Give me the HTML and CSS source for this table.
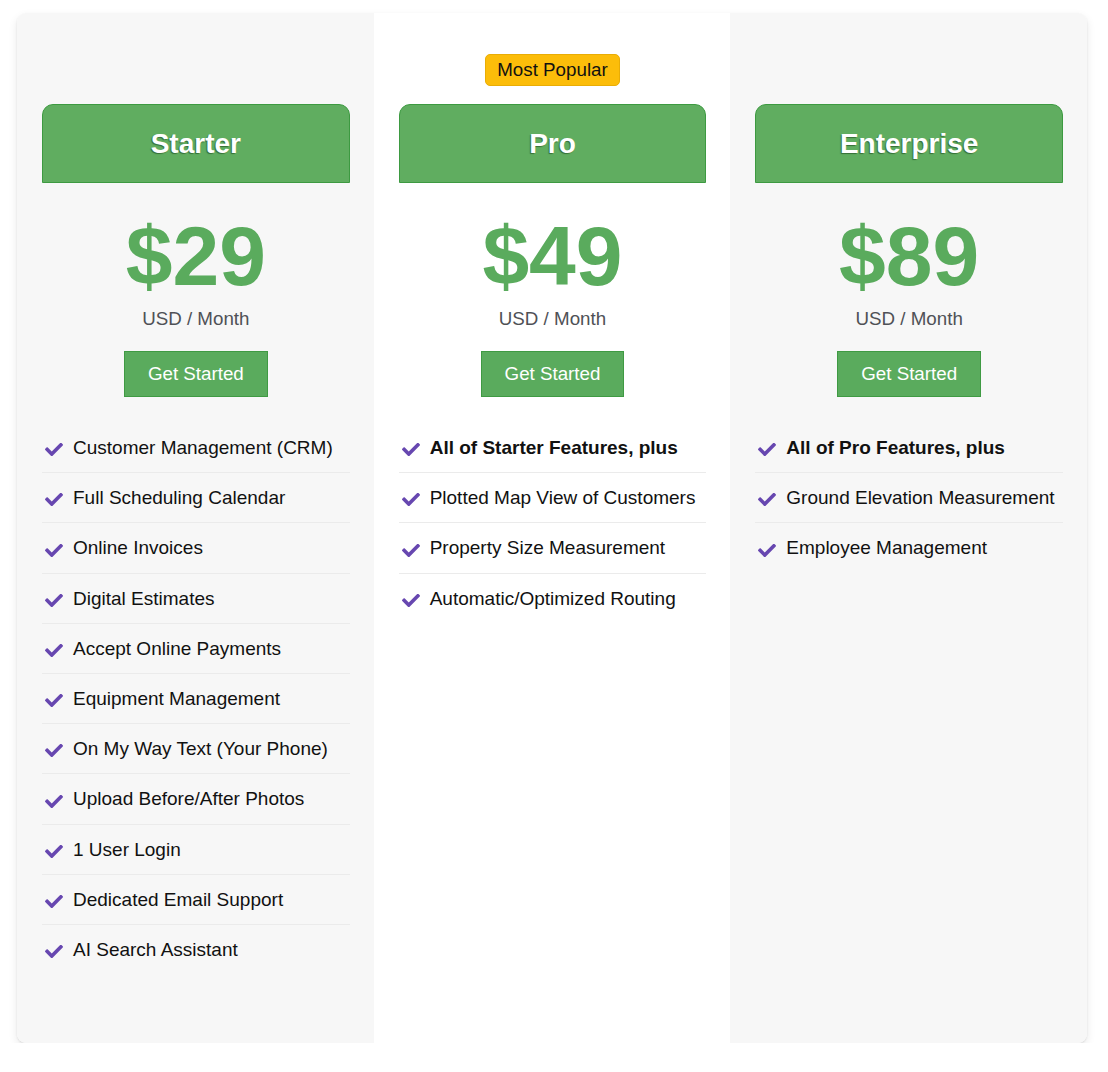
FILE: index.html
```html
<!DOCTYPE html>
<html lang="en">
<head>
<meta charset="utf-8">
<title>Pricing</title>
<link rel="stylesheet" href="styles.css">
</head>
<body>
<div class="pricing">
  <div class="plan plan-shaded">
    <div class="badge-slot"></div>
    <div class="plan-head"><h2>Starter</h2></div>
    <div class="price">$29</div>
    <div class="period">USD / Month</div>
    <div class="cta-row"><a class="cta" href="#">Get Started</a></div>
    <ul class="features">
      <li><svg class="chk" viewBox="0 72 512 370"><path d="M173.898 439.404l-166.4-166.4c-9.997-9.997-9.997-26.206 0-36.204l36.203-36.204c9.997-9.998 26.207-9.998 36.204 0L192 312.69 432.095 72.596c9.997-9.997 26.207-9.997 36.204 0l36.203 36.204c9.997 9.997 9.997 26.206 0 36.204l-294.4 294.401c-9.998 9.997-26.207 9.997-36.204-.001z"/></svg><span>Customer Management (CRM)</span></li>
      <li><svg class="chk" viewBox="0 72 512 370"><path d="M173.898 439.404l-166.4-166.4c-9.997-9.997-9.997-26.206 0-36.204l36.203-36.204c9.997-9.998 26.207-9.998 36.204 0L192 312.69 432.095 72.596c9.997-9.997 26.207-9.997 36.204 0l36.203 36.204c9.997 9.997 9.997 26.206 0 36.204l-294.4 294.401c-9.998 9.997-26.207 9.997-36.204-.001z"/></svg><span>Full Scheduling Calendar</span></li>
      <li><svg class="chk" viewBox="0 72 512 370"><path d="M173.898 439.404l-166.4-166.4c-9.997-9.997-9.997-26.206 0-36.204l36.203-36.204c9.997-9.998 26.207-9.998 36.204 0L192 312.69 432.095 72.596c9.997-9.997 26.207-9.997 36.204 0l36.203 36.204c9.997 9.997 9.997 26.206 0 36.204l-294.4 294.401c-9.998 9.997-26.207 9.997-36.204-.001z"/></svg><span>Online Invoices</span></li>
      <li><svg class="chk" viewBox="0 72 512 370"><path d="M173.898 439.404l-166.4-166.4c-9.997-9.997-9.997-26.206 0-36.204l36.203-36.204c9.997-9.998 26.207-9.998 36.204 0L192 312.69 432.095 72.596c9.997-9.997 26.207-9.997 36.204 0l36.203 36.204c9.997 9.997 9.997 26.206 0 36.204l-294.4 294.401c-9.998 9.997-26.207 9.997-36.204-.001z"/></svg><span>Digital Estimates</span></li>
      <li><svg class="chk" viewBox="0 72 512 370"><path d="M173.898 439.404l-166.4-166.4c-9.997-9.997-9.997-26.206 0-36.204l36.203-36.204c9.997-9.998 26.207-9.998 36.204 0L192 312.69 432.095 72.596c9.997-9.997 26.207-9.997 36.204 0l36.203 36.204c9.997 9.997 9.997 26.206 0 36.204l-294.4 294.401c-9.998 9.997-26.207 9.997-36.204-.001z"/></svg><span>Accept Online Payments</span></li>
      <li><svg class="chk" viewBox="0 72 512 370"><path d="M173.898 439.404l-166.4-166.4c-9.997-9.997-9.997-26.206 0-36.204l36.203-36.204c9.997-9.998 26.207-9.998 36.204 0L192 312.69 432.095 72.596c9.997-9.997 26.207-9.997 36.204 0l36.203 36.204c9.997 9.997 9.997 26.206 0 36.204l-294.4 294.401c-9.998 9.997-26.207 9.997-36.204-.001z"/></svg><span>Equipment Management</span></li>
      <li><svg class="chk" viewBox="0 72 512 370"><path d="M173.898 439.404l-166.4-166.4c-9.997-9.997-9.997-26.206 0-36.204l36.203-36.204c9.997-9.998 26.207-9.998 36.204 0L192 312.69 432.095 72.596c9.997-9.997 26.207-9.997 36.204 0l36.203 36.204c9.997 9.997 9.997 26.206 0 36.204l-294.4 294.401c-9.998 9.997-26.207 9.997-36.204-.001z"/></svg><span>On My Way Text (Your Phone)</span></li>
      <li><svg class="chk" viewBox="0 72 512 370"><path d="M173.898 439.404l-166.4-166.4c-9.997-9.997-9.997-26.206 0-36.204l36.203-36.204c9.997-9.998 26.207-9.998 36.204 0L192 312.69 432.095 72.596c9.997-9.997 26.207-9.997 36.204 0l36.203 36.204c9.997 9.997 9.997 26.206 0 36.204l-294.4 294.401c-9.998 9.997-26.207 9.997-36.204-.001z"/></svg><span>Upload Before/After Photos</span></li>
      <li><svg class="chk" viewBox="0 72 512 370"><path d="M173.898 439.404l-166.4-166.4c-9.997-9.997-9.997-26.206 0-36.204l36.203-36.204c9.997-9.998 26.207-9.998 36.204 0L192 312.69 432.095 72.596c9.997-9.997 26.207-9.997 36.204 0l36.203 36.204c9.997 9.997 9.997 26.206 0 36.204l-294.4 294.401c-9.998 9.997-26.207 9.997-36.204-.001z"/></svg><span>1 User Login</span></li>
      <li><svg class="chk" viewBox="0 72 512 370"><path d="M173.898 439.404l-166.4-166.4c-9.997-9.997-9.997-26.206 0-36.204l36.203-36.204c9.997-9.998 26.207-9.998 36.204 0L192 312.69 432.095 72.596c9.997-9.997 26.207-9.997 36.204 0l36.203 36.204c9.997 9.997 9.997 26.206 0 36.204l-294.4 294.401c-9.998 9.997-26.207 9.997-36.204-.001z"/></svg><span>Dedicated Email Support</span></li>
      <li><svg class="chk" viewBox="0 72 512 370"><path d="M173.898 439.404l-166.4-166.4c-9.997-9.997-9.997-26.206 0-36.204l36.203-36.204c9.997-9.998 26.207-9.998 36.204 0L192 312.69 432.095 72.596c9.997-9.997 26.207-9.997 36.204 0l36.203 36.204c9.997 9.997 9.997 26.206 0 36.204l-294.4 294.401c-9.998 9.997-26.207 9.997-36.204-.001z"/></svg><span>AI Search Assistant</span></li>
    </ul>
  </div>

  <div class="plan">
    <div class="badge-slot"><span class="badge">Most Popular</span></div>
    <div class="plan-head"><h2>Pro</h2></div>
    <div class="price">$49</div>
    <div class="period">USD / Month</div>
    <div class="cta-row"><a class="cta" href="#">Get Started</a></div>
    <ul class="features">
      <li><svg class="chk" viewBox="0 72 512 370"><path d="M173.898 439.404l-166.4-166.4c-9.997-9.997-9.997-26.206 0-36.204l36.203-36.204c9.997-9.998 26.207-9.998 36.204 0L192 312.69 432.095 72.596c9.997-9.997 26.207-9.997 36.204 0l36.203 36.204c9.997 9.997 9.997 26.206 0 36.204l-294.4 294.401c-9.998 9.997-26.207 9.997-36.204-.001z"/></svg><strong>All of Starter Features, plus</strong></li>
      <li><svg class="chk" viewBox="0 72 512 370"><path d="M173.898 439.404l-166.4-166.4c-9.997-9.997-9.997-26.206 0-36.204l36.203-36.204c9.997-9.998 26.207-9.998 36.204 0L192 312.69 432.095 72.596c9.997-9.997 26.207-9.997 36.204 0l36.203 36.204c9.997 9.997 9.997 26.206 0 36.204l-294.4 294.401c-9.998 9.997-26.207 9.997-36.204-.001z"/></svg><span>Plotted Map View of Customers</span></li>
      <li><svg class="chk" viewBox="0 72 512 370"><path d="M173.898 439.404l-166.4-166.4c-9.997-9.997-9.997-26.206 0-36.204l36.203-36.204c9.997-9.998 26.207-9.998 36.204 0L192 312.69 432.095 72.596c9.997-9.997 26.207-9.997 36.204 0l36.203 36.204c9.997 9.997 9.997 26.206 0 36.204l-294.4 294.401c-9.998 9.997-26.207 9.997-36.204-.001z"/></svg><span>Property Size Measurement</span></li>
      <li><svg class="chk" viewBox="0 72 512 370"><path d="M173.898 439.404l-166.4-166.4c-9.997-9.997-9.997-26.206 0-36.204l36.203-36.204c9.997-9.998 26.207-9.998 36.204 0L192 312.69 432.095 72.596c9.997-9.997 26.207-9.997 36.204 0l36.203 36.204c9.997 9.997 9.997 26.206 0 36.204l-294.4 294.401c-9.998 9.997-26.207 9.997-36.204-.001z"/></svg><span>Automatic/Optimized Routing</span></li>
    </ul>
  </div>

  <div class="plan plan-shaded">
    <div class="badge-slot"></div>
    <div class="plan-head"><h2>Enterprise</h2></div>
    <div class="price">$89</div>
    <div class="period">USD / Month</div>
    <div class="cta-row"><a class="cta" href="#">Get Started</a></div>
    <ul class="features">
      <li><svg class="chk" viewBox="0 72 512 370"><path d="M173.898 439.404l-166.4-166.4c-9.997-9.997-9.997-26.206 0-36.204l36.203-36.204c9.997-9.998 26.207-9.998 36.204 0L192 312.69 432.095 72.596c9.997-9.997 26.207-9.997 36.204 0l36.203 36.204c9.997 9.997 9.997 26.206 0 36.204l-294.4 294.401c-9.998 9.997-26.207 9.997-36.204-.001z"/></svg><strong>All of Pro Features, plus</strong></li>
      <li><svg class="chk" viewBox="0 72 512 370"><path d="M173.898 439.404l-166.4-166.4c-9.997-9.997-9.997-26.206 0-36.204l36.203-36.204c9.997-9.998 26.207-9.998 36.204 0L192 312.69 432.095 72.596c9.997-9.997 26.207-9.997 36.204 0l36.203 36.204c9.997 9.997 9.997 26.206 0 36.204l-294.4 294.401c-9.998 9.997-26.207 9.997-36.204-.001z"/></svg><span>Ground Elevation Measurement</span></li>
      <li><svg class="chk" viewBox="0 72 512 370"><path d="M173.898 439.404l-166.4-166.4c-9.997-9.997-9.997-26.206 0-36.204l36.203-36.204c9.997-9.998 26.207-9.998 36.204 0L192 312.69 432.095 72.596c9.997-9.997 26.207-9.997 36.204 0l36.203 36.204c9.997 9.997 9.997 26.206 0 36.204l-294.4 294.401c-9.998 9.997-26.207 9.997-36.204-.001z"/></svg><span>Employee Management</span></li>
    </ul>
  </div>
</div>
</body>
</html>
```

FILE: styles.css
```css
* { box-sizing: border-box; }

html, body {
  margin: 0;
  padding: 0;
  background: #ffffff;
}

body {
  padding: 13px 21px 0 17px;
  font-family: "Liberation Sans", Arial, sans-serif;
  color: #111;
}

.pricing {
  width: 1070px;
  height: 1030px;
  display: grid;
  grid-template-columns: repeat(3, 1fr);
  background: #ffffff;
  border-radius: 9px;
  box-shadow: 0 1px 2px rgba(0, 0, 0, 0.09), 0 4px 10px rgba(0, 0, 0, 0.09);
  overflow: hidden;
}

.plan {
  padding: 0 24px 0 25px;
  display: flex;
  flex-direction: column;
}

.plan-shaded {
  background: #f7f7f7;
}

.badge-slot {
  height: 91px;
  display: flex;
  align-items: flex-end;
  justify-content: center;
  padding-bottom: 18px;
}

.badge {
  display: inline-block;
  height: 32px;
  line-height: 30px;
  padding: 0 11px;
  font-size: 18.75px;
  color: #111;
  background: #fcbd0a;
  border: 1px solid #e9ad06;
  border-radius: 5px;
}

.plan-head {
  height: 79px;
  display: flex;
  align-items: center;
  justify-content: center;
  background: #60ad60;
  border: 1px solid #3d9a41;
  border-radius: 11px 11px 0 0;
}

.plan-head h2 {
  margin: 0;
  font-size: 28px;
  font-weight: bold;
  color: #ffffff;
  text-shadow: -1px 1px 1px rgba(20, 60, 20, 0.55);
}

.price {
  margin-top: 31px;
  height: 84px;
  line-height: 84px;
  text-align: center;
  font-size: 84px;
  font-weight: bold;
  color: #5aab5d;
}

.period {
  margin-top: 9px;
  line-height: 24px;
  text-align: center;
  font-size: 18.75px;
  color: #4f5156;
}

.cta-row {
  margin-top: 20px;
  display: flex;
  justify-content: center;
}

.cta {
  display: inline-block;
  height: 46px;
  line-height: 44px;
  padding: 0 23px;
  font-size: 18.75px;
  color: #ffffff;
  text-decoration: none;
  background: #5aab5d;
  border: 1px solid #3f9a43;
}

.features {
  list-style: none;
  margin: 26px 0 0;
  padding: 0;
}

.features li {
  display: flex;
  align-items: center;
  gap: 10px;
  padding: 12px 3px;
  line-height: 25.2px;
  font-size: 19px;
  color: #111;
  border-bottom: 1px solid #ebebeb;
}

.features li:last-child {
  border-bottom: none;
}

.features strong {
  font-weight: bold;
}

.chk {
  flex: none;
  width: 18px;
  height: 13px;
  margin-top: 4px;
  fill: #6747b0;
}
```
